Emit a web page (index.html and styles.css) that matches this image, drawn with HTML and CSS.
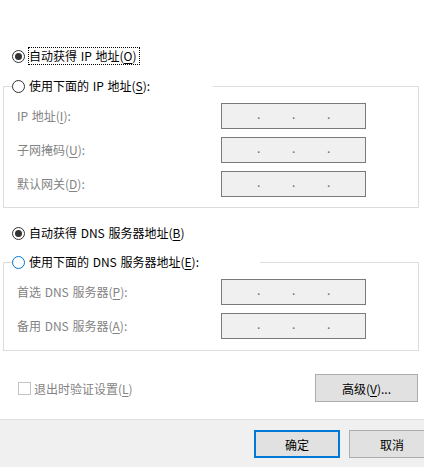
FILE: index.html
```html
<!DOCTYPE html>
<html lang="zh-CN">
<head>
<meta charset="utf-8">
<title>IPv4 属性</title>
<link rel="stylesheet" href="styles.css">
</head>
<body>
<div class="dialog">
  <div class="main">
    <div class="opt opt-ip">
      <span class="radio checked"></span>
      <span class="lbl focus">自动获得 IP 地址(<u>O</u>)</span>
    </div>
    <fieldset class="group group-ip">
      <legend class="legend legend-ip"><span class="radio"></span><span class="lbl">使用下面的 IP 地址(<u>S</u>):</span></legend>
      <div class="rows">
        <span class="field-label">IP 地址(<u>I</u>):</span>
        <div class="ip"><span class="dot">.</span><span class="dot">.</span><span class="dot">.</span></div>
        <span class="field-label">子网掩码(<u>U</u>):</span>
        <div class="ip"><span class="dot">.</span><span class="dot">.</span><span class="dot">.</span></div>
        <span class="field-label">默认网关(<u>D</u>):</span>
        <div class="ip"><span class="dot">.</span><span class="dot">.</span><span class="dot">.</span></div>
      </div>
    </fieldset>
    <div class="opt opt-dns">
      <span class="radio checked"></span>
      <span class="lbl">自动获得 DNS 服务器地址(<u>B</u>)</span>
    </div>
    <fieldset class="group group-dns">
      <legend class="legend legend-dns"><span class="radio hover"></span><span class="lbl">使用下面的 DNS 服务器地址(<u>E</u>):</span></legend>
      <div class="rows">
        <span class="field-label">首选 DNS 服务器(<u>P</u>):</span>
        <div class="ip"><span class="dot">.</span><span class="dot">.</span><span class="dot">.</span></div>
        <span class="field-label">备用 DNS 服务器(<u>A</u>):</span>
        <div class="ip"><span class="dot">.</span><span class="dot">.</span><span class="dot">.</span></div>
      </div>
    </fieldset>
    <div class="bottom-row">
      <span class="checkbox"></span>
      <span class="check-label">退出时验证设置(<u>L</u>)</span>
      <button class="btn btn-adv">高级(<u>V</u>)...</button>
    </div>
  </div>
  <div class="footer">
    <button class="btn btn-ok">确定</button>
    <button class="btn btn-cancel">取消</button>
  </div>
</div>
</body>
</html>
```

FILE: styles.css
```css
html, body {
  margin: 0;
  padding: 0;
}

body {
  width: 424px;
  height: 467px;
  overflow: hidden;
  background: #ffffff;
  font-family: "Noto Sans CJK SC", "Noto Sans", sans-serif;
  font-size: 12px;
  word-spacing: 1px;
  color: #000000;
}

.dialog {
  display: flex;
  flex-direction: column;
  height: 467px;
}

.main {
  padding-top: 48px;
}

.opt {
  display: flex;
  align-items: center;
  gap: 4px;
  padding-left: 12px;
  height: 16px;
}

.opt-dns {
  margin-top: 17px;
}

.radio {
  flex: none;
  width: 13px;
  height: 13px;
  box-sizing: border-box;
  border: 1px solid #333333;
  border-radius: 50%;
  background: #ffffff;
  display: flex;
  align-items: center;
  justify-content: center;
}

.radio.checked::after {
  content: "";
  width: 7px;
  height: 7px;
  border-radius: 50%;
  background: #333333;
}

.radio.hover {
  border-color: #0078d7;
}

.lbl {
  line-height: 16px;
  white-space: nowrap;
}

.focus {
  outline: 1px dotted #000000;
  padding-right: 2px;
}

u {
  text-decoration-thickness: 1px;
  text-underline-offset: 2px;
}

.group {
  margin: 13px 5px 0 3px;
  padding: 8px 0 10px 8px;
  border: 1px solid #dcdcdc;
  min-width: 0;
}

.group-dns {
  margin-top: 12px;
  padding-bottom: 11px;
}

.legend {
  padding: 0;
  height: 18px;
  box-sizing: border-box;
  display: flex;
  align-items: center;
  gap: 4px;
}

.legend-ip {
  width: 201px;
}

.legend-dns {
  width: 248px;
}

.rows {
  display: grid;
  grid-template-columns: 204px 145px;
  row-gap: 8px;
  align-items: center;
  padding-left: 5px;
}

.field-label {
  color: #838383;
  white-space: nowrap;
  line-height: 16px;
}

.ip {
  height: 26px;
  box-sizing: border-box;
  border: 1px solid #7a7a7a;
  background: #f0f0f0;
  display: flex;
  justify-content: center;
  gap: 32px;
  line-height: 20px;
  color: #6d6d6d;
}

.dot {
  width: 3px;
  text-align: center;
}

.bottom-row {
  margin-top: 23px;
  height: 28px;
  display: flex;
  align-items: center;
  padding: 0 6px 0 18px;
}

.checkbox {
  flex: none;
  width: 13px;
  height: 13px;
  box-sizing: border-box;
  border: 1px solid #c4c4c4;
  background: #ffffff;
}

.check-label {
  margin-left: 3px;
  color: #838383;
  white-space: nowrap;
}

.btn {
  font-family: inherit;
  font-size: 12px;
  color: #000000;
  background: #e1e1e1;
  border: 1px solid #adadad;
  height: 28px;
  box-sizing: border-box;
  padding: 0;
  margin: 0;
  flex: none;
}

.btn-adv {
  margin-left: auto;
  width: 103px;
}

.footer {
  margin-top: 17px;
  flex: 1;
  box-sizing: border-box;
  border-top: 1px solid #dfdfdf;
  background: #f0f0f0;
  display: flex;
  align-items: flex-start;
  gap: 9px;
  padding: 10px 0 0 254px;
  overflow: hidden;
}

.btn-ok {
  width: 86px;
  border: 2px solid #0078d7;
}

.btn-cancel {
  width: 86px;
}
```
